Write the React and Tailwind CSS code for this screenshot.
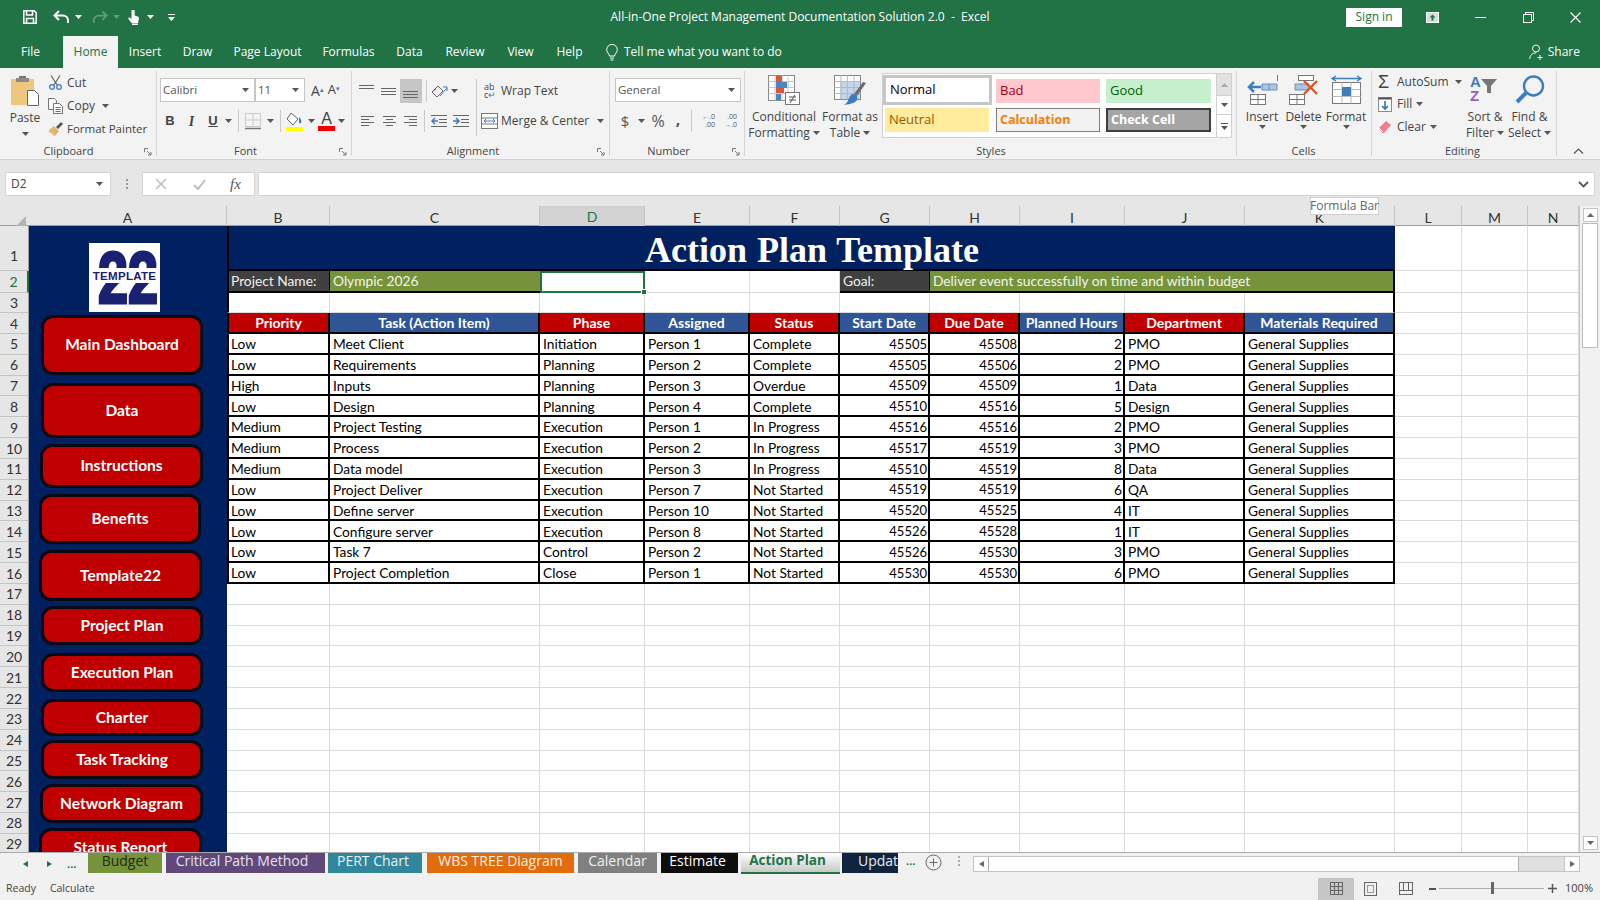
import React from "react";

const UI = "font-['Open_Sans','Noto_Sans',sans-serif]";
const COLS = "grid-cols-[29px_198px_103px_210px_105px_105px_90px_90px_90px_105px_120px_150px_67px_66px_51px]";

const Caret = ({ c = "#555", className = "" }) => (
  <svg width="7" height="4" viewBox="0 0 7 4" className={className}><path d="M0 0h7L3.5 4z" fill={c} /></svg>
);

const Launcher = () => (
  <svg width="8" height="8" viewBox="0 0 8 8" fill="none" stroke="#777" strokeWidth="1">
    <path d="M0.5 4V.5H4" /><path d="M3 3l4 4M7 4v3H4" />
  </svg>
);

const Lines = ({ rows, w = 16, h = 14, c = "#666" }) => (
  <svg width={w} height={h} viewBox={`0 0 ${w} ${h}`} stroke={c} strokeWidth="1">
    {rows.map((r, i) => <path key={i} d={`M${r[0]} ${r[2] + 0.5}H${r[1]}`} />)}
  </svg>
);

const Table3 = ({ x = 0, y = 0, w = 22, h = 10, col = "#777" }) => (
  <g fill="none" stroke={col} strokeWidth="1">
    <rect x={x + 0.5} y={y + 0.5} width={w} height={h} fill="#fff" />
    <path d={`M${x + w / 2 + 0.5} ${y}v${h}`} />
  </g>
);

const InsertIcon = () => (
  <svg width="31" height="31" viewBox="0 0 31 31">
    <Table3 x="3" y="0" w="15" h="5" />
    <path d="M15 9h15v6H15z" fill="#a9c4e4" stroke="#6d8fb9" />
    <path d="M22 9v6" stroke="#6d8fb9" />
    <path d="M14 12H2M7 7l-5 5 5 5" fill="none" stroke="#3c7fc4" strokeWidth="2.5" />
    <g fill="#fff" stroke="#777"><rect x="3.5" y="19.5" width="15" height="10" /><path d="M11 19.5v10M3.5 24.5h15" /></g>
  </svg>
);
const DeleteIcon = () => (
  <svg width="31" height="31" viewBox="0 0 31 31">
    <Table3 x="1" y="0" w="15" h="5" />
    <path d="M7 9h14v6H7z" fill="#a9c4e4" stroke="#6d8fb9" />
    <g fill="#fff" stroke="#777"><rect x="1.5" y="19.5" width="15" height="10" /><path d="M9 19.5v10M1.5 24.5h15" /></g>
    <path d="M16 6l13 13M29 6L16 19" stroke="#d9552c" strokeWidth="2.4" />
  </svg>
);
const FormatCellIcon = () => (
  <svg width="31" height="31" viewBox="0 0 31 31">
    <path d="M1 3.5h29M5 1L1 3.5 5 6M26 1l4 2.5L26 6" fill="none" stroke="#3c7fc4" strokeWidth="1.3" />
    <rect x="1.5" y="7.5" width="28" height="21" fill="#fff" stroke="#777" />
    <path d="M11 7.5v21M20 7.5v21M1.5 14.5h28M1.5 21.5h28" stroke="#bbb" />
    <rect x="11" y="12" width="9" height="9" fill="#3f7cbf" />
  </svg>
);

const CondIcon = () => (
  <svg width="32" height="30" viewBox="0 0 32 30">
    <rect x=".5" y=".5" width="26" height="25" fill="#fff" stroke="#888" />
    <path d="M7 .5v25M14 .5v25M20 .5v25M.5 6.5h26M.5 12.5h26M.5 18.5h26" stroke="#c8c8c8" />
    <rect x="8" y="1" width="6" height="6" fill="#d8573a" />
    <rect x="8" y="7" width="11" height="6" fill="#4c85c3" />
    <rect x="8" y="13" width="8" height="5" fill="#d8573a" />
    <rect x="8" y="19" width="5" height="6" fill="#4c85c3" />
    <rect x="17.5" y="17.5" width="14" height="12" fill="#fff" stroke="#777" />
    <path d="M21 22h7M21 25h7M27 20l-5 8" stroke="#555" fill="none" />
  </svg>
);
const TableFmtIcon = () => (
  <svg width="33" height="32" viewBox="0 0 33 32">
    <rect x=".5" y=".5" width="26" height="24" fill="#fff" stroke="#888" />
    <path d="M7 .5v24M13.5 .5v24M20 .5v24M.5 6.5h26M.5 12.5h26M.5 18.5h26" stroke="#bbb" />
    <rect x="7" y="7" width="19" height="17" fill="#bfd2e9" opacity=".9" />
    <path d="M7 7v17M13.5 7v17M20 7v17M7 12.5h19M7 18.5h19" stroke="#a7bcd6" />
    <path d="M32 8l-9 13-3-2 9-12z" fill="#6e6e6e" />
    <path d="M19 19c4 0 5 3 4 6-2 3-6 4-13 5 3-2 4-4 5-7 1-2 2-4 4-4z" fill="#3f7cbf" />
  </svg>
);

const PasteIcon = () => (
  <svg width="30" height="31" viewBox="0 0 30 31">
    <rect x="1" y="4" width="23" height="26" rx="1" fill="#eec77c" />
    <path d="M9 3h7V1h-7z" fill="#777" /><rect x="6" y="3" width="13" height="4" fill="#8a8a8a" />
    <path d="M17.5 15.5h7l4 4v11h-11z" fill="#fff" stroke="#666" />
  </svg>
);
const CutIcon = () => (
  <svg width="15" height="15" viewBox="0 0 15 15" fill="none">
    <path d="M3 .5l6.5 10M12 .5L5.5 10.5" stroke="#666" strokeWidth="1.2" />
    <circle cx="4" cy="12" r="2.3" stroke="#3f7cbf" strokeWidth="1.3" /><circle cx="11" cy="12" r="2.3" stroke="#3f7cbf" strokeWidth="1.3" />
  </svg>
);
const CopyIcon = () => (
  <svg width="15" height="16" viewBox="0 0 15 16" fill="none" stroke="#777">
    <path d="M.5.5h6l2 2v9h-8z" fill="#fff" /><path d="M5.5 5.5h6l3 3v7h-9z" fill="#fff" />
    <path d="M7.5 9.5h5M7.5 11.5h5M7.5 13.5h5" stroke="#3f7cbf" />
  </svg>
);
const PainterIcon = () => (
  <svg width="15" height="14" viewBox="0 0 15 14">
    <path d="M1 8l5-4 5 5-4 5c-2-1-3-2-3-3-2 0-3 0-3-3z" fill="#e5b56b" />
    <path d="M8 5l5-5 2 2-5 5z" fill="#555" />
  </svg>
);
const BorderIcon = () => (
  <svg width="16" height="17" viewBox="0 0 16 17" fill="none" stroke="#a8a8a8">
    <rect x=".5" y=".5" width="15" height="13" strokeDasharray="1 1" /><path d="M8 .5v13M.5 7h15" strokeDasharray="1 1" />
    <path d="M0 15.5h16" stroke="#777" strokeWidth="1.5" />
  </svg>
);
const FillIcon = () => (
  <svg width="17" height="20" viewBox="0 0 17 20">
    <path d="M5 2l7 6-5 6-6-6z" fill="#fff" stroke="#666" /><path d="M13 6c2 2 3 4 2 6-1 1-2 0-2-1z" fill="#3f7cbf" />
    <rect y="16" width="17" height="4" fill="#ffff00" />
  </svg>
);
const FontColorIcon = () => (
  <div className="flex flex-col items-center w-[17px] h-[20px] leading-none">
    <span className="text-[16px] font-['Liberation_Sans',sans-serif] text-[#444] h-[15px] leading-[16px]">A</span>
    <span className="block w-[17px] h-[5px] bg-[#f00000]" />
  </div>
);

const ScrollArrow = ({ d, c = "#666" }) => <svg width="7" height="6" viewBox="0 0 7 6"><path d={d} fill={c} /></svg>;

const BigBtn = ({ icon, l1, l2, caret, w, iconH = "h-[33px]" }) => (
  <div className={`${w} flex flex-col items-center pt-[7px] shrink-0`}>
    <div className={`${iconH} flex items-start justify-center`}>{icon}</div>
    <div className="text-[12px] leading-[16px] mt-[1px] whitespace-nowrap">{l1}</div>
    <div className="text-[12px] leading-[16px] whitespace-nowrap flex items-center gap-[3px]">
      {l2}{caret && <Caret />}
    </div>
  </div>
);

const Group = ({ w, label, lp = "", launcher, children, sep = true }) => (
  <div className={`${w} shrink-0 h-full flex flex-col relative`}>
    <div className="h-[77px] flex">{children}</div>
    <div className={`${lp} text-[11px] leading-[16px] text-center text-[#444]`}>{label}</div>
    {launcher && <div className="absolute right-[5px] bottom-[3px]"><Launcher /></div>}
    {sep && <div className="absolute right-0 top-[3px] bottom-[3px] w-px bg-[#d4d4d4]" />}
  </div>
);

const Sep = ({ h = "h-[22px]", m = "mx-[3px]" }) => <div className={`${h} ${m} w-px bg-[#c9c9c9] shrink-0`} />;

function TitleBar() {
  return (
    <div className="h-[34px] bg-[#217346] flex items-center text-white">
      <div className="flex-1 flex items-center">
        <svg className="ml-[23px]" width="14" height="14" viewBox="0 0 14 14" fill="none" stroke="#fff" strokeWidth="1.5">
          <path d="M.8.8h10.4l2 2v10.4H.8z" /><path d="M3.5 1v4h6V1M3.5 13V8.5h7V13" />
        </svg>
        <svg className="ml-[16px]" width="17" height="14" viewBox="0 0 17 14" fill="none" stroke="#fff" strokeWidth="2">
          <path d="M6 1L1.5 5.5 6 10" /><path d="M2 5.5h8a5 5 0 0 1 5 5V13" />
        </svg>
        <Caret c="#fff" className="ml-[5px]" />
        <svg className="ml-[10px]" width="16" height="14" viewBox="0 0 17 14" fill="none" stroke="#5f9c7c" strokeWidth="2">
          <path d="M11 1l4.5 4.5L11 10" /><path d="M15 5.5H7a5 5 0 0 0-5 5V13" />
        </svg>
        <Caret c="#5f9c7c" className="ml-[5px]" />
        <svg className="ml-[8px]" width="11" height="15" viewBox="0 0 11 15" fill="#fff">
          <path d="M3.5 1a1.6 1.6 0 0 1 3.2 0v4.6l3 .8c.9.3 1.3 1 1.2 1.8L10 13.5H4L.6 9.2c-.7-1.2.7-2.2 1.7-1.3l1.2 1.2z" />
          <rect x="4" y="14" width="6" height="1" />
        </svg>
        <Caret c="#fff" className="ml-[8px]" />
        <svg className="ml-[14px]" width="7" height="7" viewBox="0 0 7 7" fill="#fff"><path d="M0 0h7v1H0zM0 3h7L3.5 7z" /></svg>
      </div>
      <div className={`${UI} text-[12px] whitespace-pre`}>All-in-One Project Management Documentation Solution 2.0  -  Excel</div>
      <div className="flex-1 flex items-center justify-end">
        <div className={`${UI} w-[56px] h-[19px] bg-white text-[#217346] text-[12px] flex items-center justify-center`}>Sign in</div>
        <svg className="ml-[24px]" width="13" height="11" viewBox="0 0 13 11"><rect x=".5" y=".5" width="12" height="10" fill="#cfe2d8" stroke="#fff" /><path d="M6.5 2.5l3 3h-2v3h-2v-3h-2z" fill="#217346" /></svg>
        <div className="ml-[36px] w-[11px] h-px bg-white" />
        <svg className="ml-[37px]" width="11" height="11" viewBox="0 0 11 11" fill="none" stroke="#fff"><rect x=".5" y="2.5" width="8" height="8" /><path d="M2.5 2.5v-2h8v8h-2" /></svg>
        <svg className="ml-[36px] mr-[19px]" width="11" height="11" viewBox="0 0 11 11" stroke="#fff" strokeWidth="1.1"><path d="M.5.5l10 10M10.5.5l-10 10" /></svg>
      </div>
    </div>
  );
}

const tabs = [
  ["File", "w-[61px]"], ["Home", "w-[55px] ml-[2px]"], ["Insert", "w-[54px]"], ["Draw", "w-[51px]"], ["Page Layout", "w-[89px]"],
  ["Formulas", "w-[73px]"], ["Data", "w-[49px]"], ["Review", "w-[62px]"], ["View", "w-[49px]"], ["Help", "w-[49px]"],
];

function TabBar() {
  return (
    <div className={`${UI} h-[34px] bg-[#217346] flex items-end text-[12px] text-white`}>
      {tabs.map(([t, c]) => (
        <div key={t} className={`${c} h-[32px] flex items-center justify-center ${t === "Home" ? "bg-[#f3f3f3] text-[#217346]" : ""}`}>{t}</div>
      ))}
      <div className="h-[32px] flex items-center ml-[12px]">
        <svg width="12" height="17" viewBox="0 0 12 17" fill="none" stroke="#fff" strokeWidth="1"><path d="M3.5 12C3 9.5.7 8.5.7 5.7a5.3 5.3 0 0 1 10.6 0c0 2.8-2.3 3.8-2.8 6.3zM4 14h4M4.5 16h3" /></svg>
        <span className="ml-[6px] text-[12px]">Tell me what you want to do</span>
      </div>
      <div className="flex-1" />
      <div className="h-[32px] flex items-center mr-[20px]">
        <svg width="16" height="16" viewBox="0 0 16 16" fill="none" stroke="#fff"><circle cx="7" cy="4.5" r="3.5" /><path d="M.8 15c0-4 2.5-6 6.2-6M11 11v5M8.5 13.5h5" /></svg>
        <span className="ml-[3px]">Share</span>
      </div>
    </div>
  );
}

function Ribbon() {
  const drop = "h-[24px] bg-white border border-[#c6c6c6] flex items-center justify-between pl-[2px] pr-[5px] text-[11.5px] text-[#555] shrink-0";
  const style = "text-[13px] flex items-center pl-[4px] h-[24px] overflow-hidden whitespace-nowrap";
  const bold = "text-[12.5px] flex items-center pl-[3px] h-[24px] overflow-hidden whitespace-nowrap font-bold";
  return (
    <div className={`${UI} h-[92px] bg-[#f3f3f3] border-b border-[#d2d2d2] flex text-[#444]`}>
      <Group w="w-[157px]" label="Clipboard" lp="pr-[20px]" launcher>
        <div className="w-[46px] ml-[2px] flex flex-col items-center pt-[7px]">
          <PasteIcon />
          <div className="text-[12px] leading-[16px] mt-[4px]">Paste</div>
          <Caret className="mt-[6px]" />
        </div>
        <div className="flex flex-col pt-[3px]">
          <div className="h-[23px] flex items-center text-[12px]"><CutIcon /><span className="ml-[4px]">Cut</span></div>
          <div className="h-[23px] flex items-center text-[12px]"><CopyIcon /><span className="ml-[4px]">Copy</span><Caret className="ml-[7px]" /></div>
          <div className="h-[23px] flex items-center text-[11.5px] whitespace-nowrap"><PainterIcon /><span className="ml-[4px]">Format Painter</span></div>
        </div>
      </Group>
      <Group w="w-[195px]" label="Font" lp="pr-[18px]" launcher>
        <div className="flex flex-col pl-[3px] pt-[10px]">
          <div className="flex items-center">
            <div className={`${drop} w-[95px]`}>Calibri<Caret /></div>
            <div className={`${drop} w-[50px]`}>11<Caret /></div>
            <span className="ml-[6px] text-[14px]">A<sup className="text-[7px] text-[#3f7cbf]">▴</sup></span>
            <span className="ml-[4px] text-[13px]">A<sup className="text-[7px] text-[#3f7cbf]">▾</sup></span>
          </div>
          <div className="flex items-center mt-[8px] h-[22px]">
            <span className="w-[20px] text-center font-bold text-[13px] font-['Liberation_Sans',sans-serif]">B</span>
            <span className="w-[23px] text-center italic text-[14px] font-bold font-['Liberation_Serif',serif]">I</span>
            <span className="w-[20px] text-center underline font-bold text-[13px] font-['Liberation_Sans',sans-serif]">U</span>
            <Caret className="ml-[2px]" />
            <Sep m="ml-[6px] mr-[6px]" />
            <BorderIcon />
            <Caret className="ml-[6px]" />
            <Sep m="ml-[6px] mr-[5px]" />
            <FillIcon />
            <Caret className="ml-[5px]" />
            <div className="ml-[3px]"><FontColorIcon /></div>
            <Caret className="ml-[3px]" />
          </div>
        </div>
      </Group>
      <Group w="w-[258px]" label="Alignment" lp="pr-[16px]" launcher>
        <div className="flex flex-col pl-[7px] pt-[11px] w-[124px] shrink-0">
          <div className="flex items-center h-[23px]">
            <Lines rows={[[0, 15, 1], [0, 15, 4]]} />
            <div className="ml-[6px]"><Lines rows={[[0, 15, 4], [0, 15, 7], [0, 15, 10]]} /></div>
            <div className="w-[22px] h-[24px] ml-[3px] bg-[#c6c6c6] flex items-center justify-center"><Lines rows={[[0, 15, 7], [0, 15, 10], [0, 15, 13]]} /></div>
            <Sep m="mx-[4px]" />
            <svg width="17" height="16" viewBox="0 0 17 16" fill="none" stroke="#666"><path d="M1 9l6-6 5 5-6 6zM1 9l4-3" /><path d="M9 13l7-8M12 4h4v4" stroke="#3f7cbf" /></svg>
            <Caret className="ml-[3px]" />
          </div>
          <div className="flex items-center mt-[8px] h-[22px] pl-[2px]">
            <Lines w={13} rows={[[0, 13, 2], [0, 8, 5], [0, 13, 8], [0, 8, 11]]} />
            <div className="ml-[9px]"><Lines w={13} rows={[[0, 13, 2], [3, 10, 5], [0, 13, 8], [3, 10, 11]]} /></div>
            <div className="ml-[8px]"><Lines w={13} rows={[[0, 13, 2], [5, 13, 5], [0, 13, 8], [5, 13, 11]]} /></div>
            <Sep m="ml-[7px] mr-[6px]" />
            <svg width="16" height="14" viewBox="0 0 16 14" fill="none"><path d="M0 1.5h16M8 5.5h8M8 8.5h8M0 12.5h16" stroke="#666" /><path d="M7 7H1M4 4L1 7l3 3" stroke="#3f7cbf" strokeWidth="1.5" /></svg>
            <div className="ml-[6px]"><svg width="16" height="14" viewBox="0 0 16 14" fill="none"><path d="M0 1.5h16M8 5.5h8M8 8.5h8M0 12.5h16" stroke="#666" /><path d="M0 7h6M3 4l3 3-3 3" stroke="#3f7cbf" strokeWidth="1.5" /></svg></div>
          </div>
        </div>
        <div className="w-px h-[57px] mt-[11px] bg-[#c9c9c9]" />
        <div className="flex flex-col pl-[4px] pt-[11px] text-[12px]">
          <div className="flex items-center h-[23px] pl-[3px]">
            <div className="w-[14px] leading-[8px] text-[9px] text-[#444]"><div>ab</div><div>c<span className="text-[#3f7cbf]">↵</span></div></div>
            <span className="ml-[3px]">Wrap Text</span>
          </div>
          <div className="flex items-center h-[22px] mt-[8px] whitespace-nowrap">
            <svg width="17" height="18" viewBox="0 0 17 18" fill="#fff" stroke="#777"><rect x=".5" y="1.5" width="16" height="15" /><path d="M.5 6h16M.5 12h16" /><path d="M3 9h11M5 7l-2 2 2 2M12 7l2 2-2 2" stroke="#3f7cbf" fill="none" /></svg>
            <span className="ml-[3px]">Merge &amp; Center</span>
            <Caret className="ml-[8px]" />
          </div>
        </div>
      </Group>
      <Group w="w-[135px]" label="Number" lp="pr-[18px]" launcher>
        <div className="flex flex-col pl-[5px] pt-[10px] text-[#555]">
          <div className={`${drop} w-[126px]`}>General<Caret /></div>
          <div className="flex items-center mt-[8px] h-[22px]">
            <span className="w-[20px] text-center text-[15px]">$</span>
            <Caret className="ml-[3px]" />
            <span className="ml-[4px] text-[16px] w-[18px] text-center">%</span>
            <span className="ml-[4px] w-[14px] text-center text-[16px] font-bold leading-none -mt-[5px]">,</span>
            <Sep m="ml-[6px] mr-[9px]" />
            <div className="w-[14px] text-[7px] leading-[8px] text-right"><div><span className="text-[#3f7cbf]">←</span>.0</div><div>.00</div></div>
            <div className="ml-[8px] w-[14px] text-[7px] leading-[8px] text-right"><div>.00</div><div><span className="text-[#3f7cbf]">→</span>.0</div></div>
          </div>
        </div>
      </Group>
      <Group w="w-[492px]" label="Styles">
        <BigBtn w="w-[72px] ml-[3px]" icon={<CondIcon />} l1="Conditional" l2="Formatting" caret />
        <BigBtn w="w-[60px]" icon={<TableFmtIcon />} l1="Format as" l2="Table" caret />
        <div className="w-[350px] h-[65px] mt-[5px] ml-[2px] flex border border-[#d0d0d0] bg-white shrink-0">
          <div className="w-[333px] grid grid-cols-[109px_104px_107px] gap-x-[4px] content-start pt-[1px]">
            <div className={`${style} h-[30px] bg-white border-[3px] border-[#c6c6c6] text-black pl-[3px]`}>Normal</div>
            <div className={`${style} mt-[4px] bg-[#ffc7ce] text-[#9c0006]`}>Bad</div>
            <div className={`${style} mt-[4px] ml-[2px] bg-[#c6efce] text-[#006100]`}>Good</div>
            <div className={`${style} mt-[3px] ml-[2px] bg-[#ffeb9c] text-[#9c5700] w-[104px]`}>Neutral</div>
            <div className={`${bold} mt-[3px] bg-[#f2f2f2] border border-[#7f7f7f] text-[#fa7d00]`}>Calculation</div>
            <div className={`${bold} mt-[3px] ml-[2px] bg-[#a5a5a5] border-2 border-[#3f3f3f] text-white`}>Check Cell</div>
          </div>
          <div className="flex-1 flex flex-col border-l border-[#d0d0d0]">
            <div className="h-[21px] bg-[#e2e2e2] flex items-center justify-center"><ScrollArrow d="M3.5 1L7 5H0z" c="#aaa" /></div>
            <div className="h-[20px] flex items-center justify-center border-y border-[#d0d0d0]"><Caret /></div>
            <div className="flex-1 flex flex-col items-center justify-center gap-[2px]"><div className="w-[7px] h-px bg-[#555]" /><Caret /></div>
          </div>
        </div>
      </Group>
      <Group w="w-[135px]" label="Cells" lp="pr-[2px]">
        <BigBtn w="w-[42px] ml-[4px]" icon={<InsertIcon />} l1="Insert" l2="" caret />
        <BigBtn w="w-[41px]" icon={<DeleteIcon />} l1="Delete" l2="" caret />
        <BigBtn w="w-[44px]" icon={<FormatCellIcon />} l1="Format" l2="" caret />
      </Group>
      <Group w="w-[185px]" label="Editing" lp="pr-[4px]">
        <div className="w-[94px] pl-[6px] pt-[3px] flex flex-col text-[12px] shrink-0">
          <div className="h-[22px] flex items-center">
            <span className="w-[14px] text-[18px] leading-none text-[#444] font-['Liberation_Sans',sans-serif]">Σ</span>
            <span className="ml-[5px]">AutoSum</span><Caret className="ml-[6px]" />
          </div>
          <div className="h-[22px] flex items-center">
            <svg width="14" height="15" viewBox="0 0 14 15" fill="#fff" stroke="#888"><rect x=".5" y=".5" width="13" height="14" /><path d="M.5 1.5h13" stroke="#555" strokeWidth="2" /><path d="M7 4v8M4 9l3 3 3-3" stroke="#2f73b9" strokeWidth="1.6" fill="none" /></svg>
            <span className="ml-[5px]">Fill</span><Caret className="ml-[4px]" />
          </div>
          <div className="h-[23px] flex items-center">
            <svg width="14" height="14" viewBox="0 0 14 14"><path d="M1 8l7-7 5 4-7 8H4z" fill="#ee7f8f" /><path d="M1 8l4 4" stroke="#fff" /></svg>
            <span className="ml-[5px]">Clear</span><Caret className="ml-[4px]" />
          </div>
        </div>
        <BigBtn w="w-[38px]" icon={
          <div className="flex items-center w-[30px] font-['Liberation_Sans',sans-serif] font-bold">
            <div className="text-[15px] leading-[14px]"><div className="text-[#3f7cbf]">A</div><div className="text-[#9a5cc0]">Z</div></div>
            <svg className="-mt-[6px]" width="16" height="16" viewBox="0 0 16 16"><path d="M0 1h16l-6 7v7H6V8z" fill="#777" /></svg>
          </div>} l1="Sort &" l2="Filter" caret />
        <BigBtn w="w-[41px] ml-[5px]" icon={
          <svg width="30" height="30" viewBox="0 0 30 30" fill="none"><circle cx="18.5" cy="11" r="9.5" stroke="#3f7cbf" strokeWidth="2.4" /><path d="M11 18L2 27" stroke="#3f7cbf" strokeWidth="4" /></svg>} l1="Find &" l2="Select" caret />
      </Group>
      <div className="flex-1 flex items-end justify-center pb-[5px] relative">
        <svg width="11" height="6" viewBox="0 0 11 6" fill="none" stroke="#555" strokeWidth="1.2"><path d="M1 5.5l4.5-4.5 4.5 4.5" /></svg>
      </div>
    </div>
  );
}

function FormulaBar() {
  return (
    <div className="h-[46px] bg-[#e6e6e6] flex items-start pt-[12px] text-[#444]">
      <div className={`${UI} ml-[5px] w-[106px] h-[24px] bg-white border border-[#d4d4d4] flex items-center justify-between pl-[5px] pr-[7px] text-[12px]`}>D2<Caret /></div>
      <div className="w-[31px] h-[24px] flex flex-col items-center justify-center gap-[2px]">
        <span className="w-[2px] h-[2px] bg-[#999]" /><span className="w-[2px] h-[2px] bg-[#999]" /><span className="w-[2px] h-[2px] bg-[#999]" />
      </div>
      <div className="w-[113px] h-[24px] bg-white border border-[#d4d4d4] flex items-center">
        <svg className="ml-[12px]" width="12" height="12" viewBox="0 0 12 12" stroke="#bdbdbd" strokeWidth="1.5"><path d="M1 1l10 10M11 1L1 11" /></svg>
        <svg className="ml-[26px]" width="13" height="11" viewBox="0 0 13 11" fill="none" stroke="#bdbdbd" strokeWidth="2"><path d="M1 6l4 4 7-9" /></svg>
        <span className="ml-[24px] italic font-['Liberation_Serif',serif] text-[15px] text-[#555]">fx</span>
      </div>
      <div className="ml-[3px] flex-1 mr-[5px] h-[24px] bg-white border border-[#d4d4d4] flex items-center justify-end pr-[5px]">
        <svg width="11" height="7" viewBox="0 0 11 7" fill="none" stroke="#555" strokeWidth="1.8"><path d="M1 1l4.5 4.5L10 1" /></svg>
      </div>
    </div>
  );
}

const CELL = "font-['Lato','Liberation_Sans',sans-serif]";
const COL_LETTERS = ["A", "B", "C", "D", "E", "F", "G", "H", "I", "J", "K", "L", "M", "N"];

function ColHeaders() {
  return (
    <div className={`grid ${COLS} h-[20px] bg-[#e6e6e6] border-b border-[#9e9e9e] text-[14px] text-[#333] ${CELL}`}>
      <div className="flex items-end justify-end pr-[3px] pb-[2px]">
        <svg width="13" height="13" viewBox="0 0 13 13"><path d="M13 0v13H0z" fill="#b4b4b4" /></svg>
      </div>
      {COL_LETTERS.map((l) => (
        <div key={l} className={`flex items-center justify-center pb-[2px] border-r border-[#c4c4c4] ${l === "D" ? "bg-[#d2d2d2] text-[#217346] border-b-2 border-b-[#217346]" : ""}`}>{l}</div>
      ))}
    </div>
  );
}

const NAV = [
  ["Main Dashboard", "mt-[3px] h-[60px] ml-[12px] w-[162px]"],
  ["Data", "mt-[8px] h-[55px] ml-[12px] w-[162px]"],
  ["Instructions", "mt-[6px] h-[44px] ml-[11px] w-[163px]"],
  ["Benefits", "mt-[6px] h-[50px] ml-[10px] w-[162px]"],
  ["Template22", "mt-[6px] h-[51px] ml-[10px] w-[163px]"],
  ["Project Plan", "mt-[5px] h-[39px] ml-[12px] w-[162px]"],
  ["Execution Plan", "mt-[8px] h-[39px] ml-[12px] w-[162px]"],
  ["Charter", "mt-[7px] h-[37px] ml-[12px] w-[162px]"],
  ["Task Tracking", "mt-[4px] h-[39px] ml-[12px] w-[162px]"],
  ["Network Diagram", "mt-[5px] h-[39px] ml-[11px] w-[163px]"],
  ["Status Report", "mt-[5px] h-[40px] ml-[10px] w-[163px]"],
];

function SidePanel() {
  return (
    <div className="row-start-1 row-span-29 col-start-2 bg-[#002060] flex flex-col overflow-hidden max-h-[626px]">
      <div className="mt-[17px] ml-[60px] w-[71px] h-[69px] bg-white relative overflow-hidden shrink-0 font-['Liberation_Sans',sans-serif]">
        <div className="absolute left-0 right-0 top-[-3px] text-center font-bold text-[72px] leading-[76px] text-[#1b2172] scale-x-[0.75] [-webkit-text-stroke:3px_#1b2172]">22</div>
        <div className="absolute left-0 right-0 top-[25px] h-[15px] bg-white" />
        <div className="absolute left-0 right-0 top-[27px] text-center text-[11.5px] leading-[12px] text-[#1b2172] font-bold tracking-[0.3px]">TEMPLATE</div>
      </div>
      {NAV.map(([t, c]) => (
        <div key={t} className={`${c} shrink-0 bg-[#c00000] border-[3px] border-[#0a0a14] rounded-[12px] flex items-center justify-center text-white font-bold text-[15.5px] whitespace-nowrap`}>{t}</div>
      ))}
    </div>
  );
}

const ROWS = [
  ["Low", "Meet Client", "Initiation", "Person 1", "Complete", 45505, 45508, 2, "PMO"],
  ["Low", "Requirements", "Planning", "Person 2", "Complete", 45505, 45506, 2, "PMO"],
  ["High", "Inputs", "Planning", "Person 3", "Overdue", 45509, 45509, 1, "Data"],
  ["Low", "Design", "Planning", "Person 4", "Complete", 45510, 45516, 5, "Design"],
  ["Medium", "Project Testing", "Execution", "Person 1", "In Progress", 45516, 45516, 2, "PMO"],
  ["Medium", "Process", "Execution", "Person 2", "In Progress", 45517, 45519, 3, "PMO"],
  ["Medium", "Data model", "Execution", "Person 3", "In Progress", 45510, 45519, 8, "Data"],
  ["Low", "Project Deliver", "Execution", "Person 7", "Not Started", 45519, 45519, 6, "QA"],
  ["Low", "Define server", "Execution", "Person 10", "Not Started", 45520, 45525, 4, "IT"],
  ["Low", "Configure server", "Execution", "Person 8", "Not Started", 45526, 45528, 1, "IT"],
  ["Low", "Task 7", "Control", "Person 2", "Not Started", 45526, 45530, 3, "PMO"],
  ["Low", "Project Completion", "Close", "Person 1", "Not Started", 45530, 45530, 6, "PMO"],
];
const HEAD = ["Priority", "Task (Action Item)", "Phase", "Assigned", "Status", "Start Date", "Due Date", "Planned Hours", "Department", "Materials Required"];

const GRIDLINE = "border-r border-b border-[#dcdcdc]";
const RowNum = ({ n, sel, low }) => (
  <div className={`col-start-1 flex justify-center bg-[#e6e6e6] border-b border-[#c4c4c4] border-r border-r-[#9e9e9e] text-[14px] ${low ? "items-end pb-[4px]" : "items-center"} ${sel ? "bg-[#d2d2d2] text-[#217346] border-r-2 border-r-[#217346]" : "text-[#333]"}`}>{n}</div>
);
const Blank = ({ n }) => Array.from({ length: n }, (_, i) => <div key={i} className={GRIDLINE} />);

function Sheet() {
  const black = "border-r-2 border-b-2 border-black";
  return (
    <div className={`grid ${COLS} grid-rows-[45px_22px_20px_21px_repeat(25,20.83px)] h-[626px] overflow-hidden bg-white text-[13.75px] text-black ${CELL}`}>
      <SidePanel />
      <RowNum n={1} low />
      <div className="col-span-10 bg-[#002060] border-l-2 border-b-2 border-black flex items-center justify-center pt-[5px] text-white font-bold text-[36px] leading-none font-['Liberation_Serif',serif] [word-spacing:1px]">Action Plan Template</div>
      <Blank n={3} />
      <RowNum n={2} sel />
      <div className="bg-[#404040] text-[#f0f0f0] border-l-2 border-b-2 border-r border-black flex items-center pt-[1px] pl-[2px]">Project Name:</div>
      <div className="bg-[#76933c] text-[#f4f4e8] border-b-2 border-black flex items-center pt-[1px] pl-[3px]">Olympic 2026</div>
      <div className="relative border-2 border-[#217346] bg-white">
        <span className="absolute -right-[4px] -bottom-[4px] w-[6px] h-[6px] bg-[#217346] border border-white" />
      </div>
      <div className={GRIDLINE} />
      <div className={GRIDLINE} />
      <div className="bg-[#404040] text-[#f0f0f0] border-b-2 border-r border-black flex items-center pt-[1px] pl-[3px]">Goal:</div>
      <div className="col-span-4 bg-[#76933c] text-[#f4f4e8] border-r-2 border-b-2 border-black flex items-center pt-[1px] pl-[3px]">Deliver event successfully on time and within budget</div>
      <Blank n={3} />
      <RowNum n={3} />
      <div className={`${GRIDLINE} border-l-2 border-l-black`} />
      <Blank n={8} />
      <div className="border-r-2 border-r-black border-b border-b-[#dcdcdc]" />
      <Blank n={3} />
      <RowNum n={4} />
      {HEAD.map((h, i) => (
        <div key={h} className={`${i % 2 ? "bg-[#2f5597]" : "bg-[#c00000]"} text-white text-[14px] font-bold ${black} ${i === 0 ? "border-l-2" : ""} flex items-center justify-center whitespace-nowrap`}>{h}</div>
      ))}
      <Blank n={3} />
      {ROWS.map((r, ri) => (
        <React.Fragment key={ri}>
          <RowNum n={ri + 5} />
          {r.map((v, i) => (
            <div key={i} className={`${black} ${i === 0 ? "border-l-2 pl-[2px]" : ""} pt-[2px] flex items-center whitespace-nowrap ${typeof v === "number" ? (v > 100 ? "justify-end pr-[1px] text-[13px]" : "justify-end pr-[1px]") : i > 0 ? "pl-[3px]" : ""}`}>{v}</div>
          ))}
          <div className={`${black} pt-[2px] flex items-center pl-[3px]`}>General Supplies</div>
          <Blank n={3} />
        </React.Fragment>
      ))}
      {Array.from({ length: 13 }, (_, i) => (
        <React.Fragment key={i}>
          <RowNum n={i + 17} />
          <Blank n={13} />
        </React.Fragment>
      ))}
    </div>
  );
}

const SHEET_TABS = [
  ["Budget", "w-[74px] bg-[#76933c] text-[#1f2a0c]"],
  ["Critical Path Method", "w-[159px] ml-[4px] pr-[7px] bg-[#60497a] text-[#e8e0ee]"],
  ["PERT Chart", "w-[94px] ml-[3px] pr-[4px] bg-[#31869b] text-[#e8f2f5]"],
  ["WBS TREE Diagram", "w-[147px] ml-[5px] bg-[#e26b0a] text-[#fdf0e2]"],
  ["Calendar", "w-[79px] ml-[4px] bg-[#808080] text-[#f0f0f0]"],
  ["Estimate", "w-[77px] ml-[4px] pr-[4px] bg-[#0d0d0d] text-white"],
];

function SheetTabs() {
  return (
    <div className={`${UI} h-[25px] bg-[#f1f1f1] border-t border-[#aaa] flex items-start text-[14px]`}>
      <div className="w-[88px] h-[21px] flex items-center text-[#217346] shrink-0">
        <span className="ml-[22px]"><ScrollArrow d="M6 0v6L1 3z" c="#217346" /></span>
        <span className="ml-[17px]"><ScrollArrow d="M1 0v6l5-3z" c="#217346" /></span>
        <span className="ml-[14px] text-[11px] font-bold leading-none">...</span>
      </div>
      {SHEET_TABS.map(([t, c]) => (
        <div key={t} className={`${c} h-[20px] pb-[5px] flex items-center justify-center whitespace-nowrap shrink-0`}>{t}</div>
      ))}
      <div className="w-[99px] h-[21px] pb-[5px] pr-[6px] ml-[3px] shrink-0 bg-gradient-to-b from-white to-[#c8c8c8] border-b-2 border-[#217346] text-[#217346] font-bold text-[13.5px] flex items-center justify-center">Action Plan</div>
      <div className="w-[56px] h-[20px] pb-[5px] pl-[16px] ml-[2px] shrink-0 bg-[#0f243e] text-[#e8eef4] overflow-hidden flex items-center whitespace-nowrap">Update</div>
      <span className="ml-[8px] w-[18px] text-[#217346] text-[11px] font-bold">...</span>
      <svg className="ml-[1px] mt-[1px]" width="17" height="17" viewBox="0 0 17 17" fill="none" stroke="#666"><circle cx="8.5" cy="8.5" r="7.5" /><path d="M8.5 4.5v8M4.5 8.5h8" /></svg>
      <div className="ml-[16px] mt-[3px] flex flex-col gap-[2px]">
        <span className="w-[2px] h-[2px] bg-[#aaa]" /><span className="w-[2px] h-[2px] bg-[#aaa]" /><span className="w-[2px] h-[2px] bg-[#aaa]" />
      </div>
      <div className="ml-[13px] mt-[3px] h-[16px] flex-1 mr-[20px] flex bg-[#e0e0e0] border border-[#c4c4c4]">
        <div className="w-[15px] bg-white border-r border-[#aaa] flex items-center justify-center"><ScrollArrow d="M6 0v6L1 3z" /></div>
        <div className="w-[530px] bg-white border-r border-[#aaa]" />
        <div className="flex-1" />
        <div className="w-[15px] bg-white border-l border-[#c4c4c4] flex items-center justify-center"><ScrollArrow d="M1 0v6l5-3z" /></div>
      </div>
    </div>
  );
}

function StatusBar() {
  return (
    <div className={`${UI} h-[23px] bg-[#f1f1f1] flex items-center text-[10.5px] text-[#444]`}>
      <span className="ml-[6px]">Ready</span>
      <span className="ml-[14px]">Calculate</span>
      <div className="flex-1" />
      <div className="w-[36px] h-[22px] bg-[#c6c6c6] flex items-center justify-center">
        <svg width="13" height="13" viewBox="0 0 13 13" fill="none" stroke="#666"><rect x=".5" y=".5" width="12" height="12" /><path d="M4.5 .5v12M8.5 .5v12M.5 4.5h12M.5 8.5h12" /></svg>
      </div>
      <svg className="ml-[10px]" width="13" height="14" viewBox="0 0 13 14" fill="none" stroke="#666"><rect x=".5" y=".5" width="12" height="13" /><rect x="3.5" y="3.5" width="6" height="7" stroke="#999" /></svg>
      <svg className="ml-[22px]" width="14" height="13" viewBox="0 0 14 13" fill="none" stroke="#666"><rect x=".5" y=".5" width="13" height="12" /><path d="M4.5 .5v8M9.5 .5v8M.5 8.5h13" /></svg>
      <div className="ml-[16px] w-[7px] h-[2px] bg-[#555]" />
      <div className="ml-[3px] w-[105px] h-px bg-[#aaa] relative">
        <span className="absolute left-[52px] -top-[6px] w-[3px] h-[12px] bg-[#666]" />
      </div>
      <svg className="ml-[4px]" width="9" height="9" viewBox="0 0 9 9" stroke="#555" strokeWidth="1.5"><path d="M4.5 0v9M0 4.5h9" /></svg>
      <span className="ml-[8px] mr-[7px] text-[11px]">100%</span>
    </div>
  );
}

function Scrollbar() {
  return (
    <div className="w-[21px] bg-[#f1f1f1] flex flex-col items-center shrink-0 border-l border-[#c4c4c4]">
      <div className="w-[15px] h-[14px] mt-[2px] bg-white border border-[#c4c4c4] flex items-center justify-center"><ScrollArrow d="M3.5 1L7 5H0z" /></div>
      <div className="w-[16px] h-[125px] mt-[1px] bg-white border border-[#bdbdbd]" />
      <div className="flex-1" />
      <div className="w-[15px] h-[14px] mb-[2px] bg-white border border-[#c4c4c4] flex items-center justify-center"><ScrollArrow d="M0 1h7L3.5 5z" /></div>
    </div>
  );
}

export default function App() {
  return (
    <div className="w-[1600px] h-[900px] overflow-hidden flex flex-col relative bg-white">
      <TitleBar />
      <TabBar />
      <Ribbon />
      <FormulaBar />
      <div className="h-[646px] flex overflow-hidden">
        <div className="w-[1579px] shrink-0 flex flex-col">
          <ColHeaders />
          <Sheet />
        </div>
        <Scrollbar />
      </div>
      <SheetTabs />
      <StatusBar />
      <div className={`${UI} absolute left-[1310px] top-[197px] w-[69px] h-[18px] bg-white border border-[#cfcfcf] text-[12px] text-[#666] flex items-center justify-center whitespace-nowrap`}>Formula Bar</div>
    </div>
  );
}
